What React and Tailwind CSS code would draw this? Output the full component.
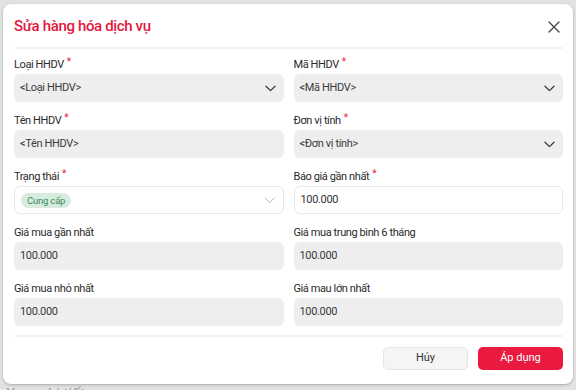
import React from "react";

const Chevron = ({ light }) => (
  <svg width="11" height="7" viewBox="0 0 11 7" fill="none">
    <path d="M1 1.2L5.5 5.6L10 1.2" stroke={light ? "#b5b5b5" : "#3a3a3a"} strokeWidth={light ? "1" : "1.3"} strokeLinecap="round" strokeLinejoin="round" />
  </svg>
);

const Label = ({ children, req }) => (
  <div className="text-[11px] leading-[14px] text-[#2a2a2a] mb-[2px] flex items-start tracking-[-0.4px]">
    <span>{children}</span>
    {req && <span className="text-[#e8193c] text-[10px] leading-[10px] ml-[3px] -mt-[1px]">*</span>}
  </div>
);

const GrayBox = ({ children, chevron }) => (
  <div className="h-[28px] rounded-[6px] bg-[#eeeeee] flex items-center justify-between pl-[6px] pr-[8px] text-[11px] text-[#3a3a3a] tracking-[-0.35px]">
    <span>{children}</span>
    {chevron && <Chevron />}
  </div>
);

const WhiteBox = ({ children, chevron }) => (
  <div className="h-[28px] rounded-[6px] bg-white border border-[#e6e6e6] flex items-center justify-between pl-[6px] pr-[8px] text-[11px] text-[#333] tracking-[-0.35px]">
    <div className="flex items-center">{children}</div>
    {chevron && <Chevron light />}
  </div>
);

export default function App() {
  return (
    <div
      className="w-[576px] h-[390px] overflow-hidden bg-[#e2e2e2] pt-[4px] pl-[3px]"
      style={{ fontFamily: "Roboto, 'Noto Sans', sans-serif" }}
    >
      <div className="w-[570px] bg-white rounded-[8px] shadow-[0_1px_3px_rgba(0,0,0,0.25)] pl-[11px] pr-[10px] pb-[14px]">
        <div className="h-[45px] flex items-center justify-between border-b-2 border-[#f2f2f2] pt-[2px]">
          <div className="text-[15px] font-medium text-[#e5173d] tracking-[-0.35px]">Sửa hàng hóa dịch vụ</div>
          <svg width="12" height="12" viewBox="0 0 12 12" className="mr-[3px]">
            <path d="M1 1L11 11M11 1L1 11" stroke="#444" strokeWidth="1.3" strokeLinecap="round" />
          </svg>
        </div>

        <div className="grid grid-cols-2 gap-x-[10px] gap-y-[12px] pt-[9px]">
          <div>
            <Label req>Loại HHDV</Label>
            <GrayBox chevron>&lt;Loại HHDV&gt;</GrayBox>
          </div>
          <div>
            <Label req>Mã HHDV</Label>
            <GrayBox chevron>&lt;Mã HHDV&gt;</GrayBox>
          </div>
          <div>
            <Label req>Tên HHDV</Label>
            <GrayBox>&lt;Tên HHDV&gt;</GrayBox>
          </div>
          <div>
            <Label req>Đơn vị tính</Label>
            <GrayBox chevron>&lt;Đơn vị tính&gt;</GrayBox>
          </div>
          <div>
            <Label req>Trạng thái</Label>
            <WhiteBox chevron>
              <span className="h-[15px] px-[6px] rounded-full bg-[#d7ecdf] text-[#3b8a5c] text-[9.5px] leading-[15px] tracking-[-0.2px]">Cung cấp</span>
            </WhiteBox>
          </div>
          <div>
            <Label req>Báo giá gần nhất</Label>
            <WhiteBox>100.000</WhiteBox>
          </div>
          <div>
            <Label>Giá mua gần nhất</Label>
            <GrayBox>100.000</GrayBox>
          </div>
          <div>
            <Label>Giá mua trung bình 6 tháng</Label>
            <GrayBox>100.000</GrayBox>
          </div>
          <div>
            <Label>Giá mua nhỏ nhất</Label>
            <GrayBox>100.000</GrayBox>
          </div>
          <div>
            <Label>Giá mau lớn nhất</Label>
            <GrayBox>100.000</GrayBox>
          </div>
        </div>

        <div className="h-[2px] bg-[#f2f2f2] mt-[9px]" />

        <div className="flex justify-end gap-[10px] mt-[10px]">
          <button className="w-[85px] h-[23px] rounded-[5px] bg-[#f5f5f5] border border-[#e6e6e6] text-[11px] text-[#333]">Hủy</button>
          <button className="w-[85px] h-[23px] rounded-[5px] bg-[#ea1a3e] text-[11px] text-white">Áp dụng</button>
        </div>
      </div>
      <div className="text-[15px] text-[#9a9a9a] leading-[18px] mt-[1px] pl-[3px]">Xem chi tiết</div>
    </div>
  );
}
